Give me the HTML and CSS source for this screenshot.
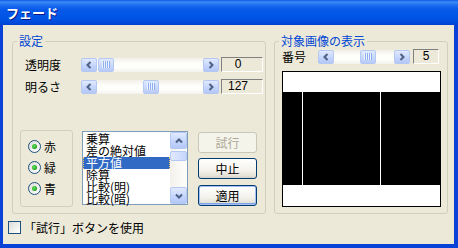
FILE: index.html
```html
<!DOCTYPE html>
<html lang="ja">
<head>
    <meta charset="UTF-8">
    <title>フェード</title>
    <link rel="stylesheet" href="styles.css">
</head>
<body>
    <div class="window">
        <div class="titlebar">フェード</div>

        <div class="client">
            <div class="groups">
                <fieldset class="group group-settings">
                    <legend>設定</legend>

                    <div class="slider-row">
                        <span class="row-label">透明度</span>
                        <div class="slider">
                            <span class="arrow-btn"><svg width="8" height="8" viewBox="0 0 8 8"><path d="M5.5 1 L2.5 4 L5.5 7" /></svg></span>
                            <span class="track"><span class="thumb" style="margin-left: 1px"><span class="grip"></span></span></span>
                            <span class="arrow-btn"><svg width="8" height="8" viewBox="0 0 8 8"><path d="M2.5 1 L5.5 4 L2.5 7" /></svg></span>
                        </div>
                        <span class="value">0</span>
                    </div>

                    <div class="slider-row second">
                        <span class="row-label">明るさ</span>
                        <div class="slider">
                            <span class="arrow-btn"><svg width="8" height="8" viewBox="0 0 8 8"><path d="M5.5 1 L2.5 4 L5.5 7" /></svg></span>
                            <span class="track"><span class="thumb" style="margin-left: 46px"><span class="grip"></span></span></span>
                            <span class="arrow-btn"><svg width="8" height="8" viewBox="0 0 8 8"><path d="M2.5 1 L5.5 4 L2.5 7" /></svg></span>
                        </div>
                        <span class="value">127</span>
                    </div>

                    <div class="bottom-row">
                        <div class="radio-box">
                            <label class="radio"><span class="radio-mark"></span>赤</label>
                            <label class="radio"><span class="radio-mark"></span>緑</label>
                            <label class="radio"><span class="radio-mark"></span>青</label>
                        </div>

                        <div class="listbox">
                            <ul class="list-items">
                                <li>乗算</li>
                                <li>差の絶対値</li>
                                <li class="selected">平方値</li>
                                <li>除算</li>
                                <li>比較(明)</li>
                                <li>比較(暗)</li>
                            </ul>
                            <div class="vscroll">
                                <span class="scroll-btn"><svg width="8" height="8" viewBox="0 0 8 8"><path d="M1 5.5 L4 2.5 L7 5.5" /></svg></span>
                                <span class="scroll-track"><span class="scroll-thumb"></span></span>
                                <span class="scroll-btn"><svg width="8" height="8" viewBox="0 0 8 8"><path d="M1 2.5 L4 5.5 L7 2.5" /></svg></span>
                            </div>
                        </div>

                        <div class="buttons">
                            <button type="button" class="btn" disabled>試行</button>
                            <button type="button" class="btn">中止</button>
                            <button type="button" class="btn btn-default">適用</button>
                        </div>
                    </div>
                </fieldset>

                <fieldset class="group group-preview">
                    <legend>対象画像の表示</legend>

                    <div class="slider-row">
                        <span class="row-label short">番号</span>
                        <div class="slider narrow">
                            <span class="arrow-btn"><svg width="8" height="8" viewBox="0 0 8 8"><path d="M5.5 1 L2.5 4 L5.5 7" /></svg></span>
                            <span class="track"><span class="thumb" style="margin-left: 26px"><span class="grip"></span></span></span>
                            <span class="arrow-btn"><svg width="8" height="8" viewBox="0 0 8 8"><path d="M2.5 1 L5.5 4 L2.5 7" /></svg></span>
                        </div>
                        <span class="value small">5</span>
                    </div>

                    <div class="preview">
                        <div class="band-white"></div>
                        <div class="band-black">
                            <span class="cell"></span>
                            <span class="line"></span>
                            <span class="cell"></span>
                            <span class="line"></span>
                            <span class="cell"></span>
                        </div>
                        <div class="band-white bottom"></div>
                    </div>
                </fieldset>
            </div>

            <label class="check-row"><span class="checkbox"></span>「試行」ボタンを使用</label>
        </div>
    </div>
</body>
</html>
```

FILE: styles.css
```css
* {
    box-sizing: border-box;
}

body {
    margin: 0;
    font-family: "Noto Sans CJK JP", sans-serif;
    font-size: 12px;
    color: #000;
    background: #ECE9D8;
}

.window {
    width: 458px;
    height: 248px;
    display: flex;
    flex-direction: column;
    background: #0842D7;
}

.titlebar {
    height: 25px;
    padding-left: 6px;
    color: #fff;
    font-size: 13px;
    font-weight: bold;
    line-height: 25px;
    text-shadow: 1px 1px 0 #0A1883;
    background: linear-gradient(to bottom, #0A5CEA 0, #3B8BF6 2px, #1F6EF0 5px, #0558E8 10px, #0055E6 18px, #0049DA 23px, #0040D0 25px);
}

.client {
    flex: 1;
    margin: 0 4px 4px 3px;
    padding: 9px 0 0 9px;
    background: #ECE9D8;
}

.groups {
    display: flex;
    gap: 8px;
}

.group {
    margin: 0;
    height: 180px;
    min-inline-size: 0;
    border: 1px solid #D0D0BF;
    border-radius: 3px;
    padding: 9px 2px 0 7px;
}

.group legend {
    margin-left: -3px;
    padding: 0 2px;
    color: #0046D5;
    line-height: 14px;
}

.group-settings {
    width: 254px;
}

.group-preview {
    width: 174px;
    padding-top: 1px;
}

/* slider rows */
.slider-row {
    display: flex;
    align-items: center;
    height: 15px;
}

.slider-row.second {
    margin-top: 7px;
}

.row-label {
    width: 61px;
    padding-left: 5px;
    line-height: 15px;
}

.row-label.short {
    width: 36px;
    padding-left: 0;
}

.slider {
    display: flex;
    width: 138px;
    height: 14px;
}

.slider.narrow {
    width: 92px;
}

.arrow-btn,
.scroll-btn {
    display: flex;
    align-items: center;
    justify-content: center;
    width: 16px;
    flex: none;
    border: 1px solid #B5C8F4;
    border-radius: 2px;
    background: linear-gradient(to bottom, #E1EAFE, #C2D3FC 60%, #B4C8F6);
}

.arrow-btn path,
.scroll-btn path {
    fill: none;
    stroke: #4D6185;
    stroke-width: 2;
}

.track {
    flex: 1;
    display: flex;
    background: linear-gradient(to bottom, #F1EFE8, #FEFEFB 40%, #FEFEFB 70%, #F3F1EC);
}

.thumb {
    display: flex;
    align-items: center;
    justify-content: center;
    width: 16px;
    border: 1px solid #B5C8F4;
    border-radius: 2px;
    background: linear-gradient(to bottom, #E1EAFE, #C6D6FC 60%, #B8CBF7);
}

.grip {
    width: 8px;
    height: 7px;
    background: repeating-linear-gradient(to right, #EEF4FE 0, #EEF4FE 1px, #8EAEF1 1px, #8EAEF1 2px);
}

.value {
    width: 42px;
    height: 15px;
    margin-left: 2px;
    padding-right: 8px;
    border: 1px solid;
    border-color: #808080 #FFFFFF #FFFFFF #808080;
    font-family: "Liberation Sans", sans-serif;
    line-height: 13px;
    text-align: center;
}

.value.small {
    width: 26px;
    margin-left: 3px;
    padding-right: 0;
}

/* bottom part of the settings group */
.bottom-row {
    display: flex;
    align-items: flex-start;
    margin-top: 36px;
}

.radio-box {
    display: flex;
    flex-direction: column;
    gap: 8px;
    width: 53px;
    height: 77px;
    padding: 9px 0 0 7px;
    border: 1px solid #D0D0BF;
    border-radius: 3px;
}

.radio {
    display: flex;
    align-items: center;
    gap: 3px;
    height: 13px;
    line-height: 13px;
}

.radio-mark {
    position: relative;
    width: 13px;
    height: 13px;
    border: 1px solid #1C5180;
    border-radius: 50%;
    background: linear-gradient(135deg, #DCDCD7, #FFFFFF);
}

.radio-mark::after {
    content: "";
    position: absolute;
    left: 3px;
    top: 3px;
    width: 5px;
    height: 5px;
    border-radius: 50%;
    background: radial-gradient(circle at 40% 40%, #5FE35F, #21A121 70%);
}

.listbox {
    display: flex;
    width: 106px;
    height: 74px;
    margin: 1px 0 0 9px;
    border: 1px solid #7F9DB9;
    background: #fff;
}

.list-items {
    flex: 1;
    margin: 0;
    padding: 1px 0 0;
    list-style: none;
}

.list-items li {
    height: 12px;
    padding-left: 2px;
    line-height: 12px;
    white-space: nowrap;
    border: 1px solid transparent;
    border-width: 0 1px;
}

.list-items li.selected {
    color: #fff;
    background: #316AC5;
    border: 1px dotted #F5C56B;
    border-width: 0 1px;
}

.vscroll {
    display: flex;
    flex-direction: column;
    width: 17px;
    background: linear-gradient(to right, #F3F1EC, #FEFEFB);
}

.scroll-btn {
    width: 17px;
    height: 17px;
}

.scroll-track {
    flex: 1;
    padding-top: 2px;
}

.scroll-thumb {
    display: block;
    height: 10px;
    border: 1px solid #B5C8F4;
    border-radius: 2px;
    background: linear-gradient(to right, #E1EAFE, #C6D6FC);
}

.buttons {
    display: flex;
    flex-direction: column;
    gap: 5px;
    margin: 2px 0 0 10px;
}

.btn {
    width: 59px;
    height: 21px;
    padding: 0;
    font-family: inherit;
    font-size: 12px;
    line-height: 19px;
    color: #000;
    border: 1px solid #003C74;
    border-radius: 3px;
    background: linear-gradient(to bottom, #FFFFFF, #F3F2EC 60%, #E3E0D6 90%, #D6D0C5);
}

.btn:disabled {
    color: #ACA899;
    border-color: #C9C7BA;
    background: #F5F4EA;
}

.btn-default {
    margin-top: 1px;
    box-shadow: inset 0 0 0 1px #A6C0F2, inset 0 -1px 0 1px #7EA2E8;
}

/* preview image */
.preview {
    width: 159px;
    height: 136px;
    margin-top: 7px;
    border: 1px solid #000;
    display: flex;
    flex-direction: column;
}

.band-white {
    height: 20px;
    background: #fff;
}

.band-white.bottom {
    height: 21px;
}

.band-black {
    display: grid;
    grid-template-columns: 19px 1px 77px 1px 1fr;
    height: 93px;
}

.band-black .cell {
    background: #000;
}

.band-black .line {
    background: #fff;
}

/* checkbox row */
.check-row {
    display: flex;
    align-items: center;
    gap: 3px;
    height: 15px;
    margin: 6px 0 0 -4px;
    line-height: 15px;
}

.checkbox {
    width: 13px;
    height: 13px;
    border: 1px solid #1C5180;
    background: linear-gradient(135deg, #DCDCD7, #FFFFFF);
}
```
